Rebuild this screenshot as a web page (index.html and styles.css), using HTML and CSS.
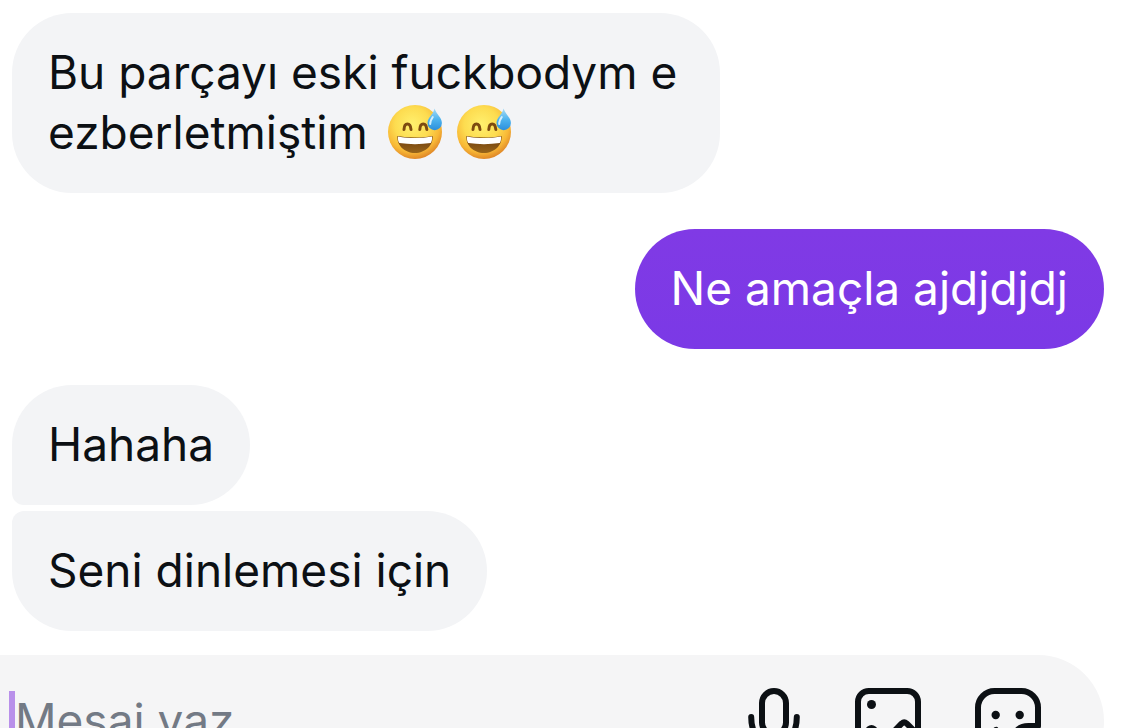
FILE: index.html
```html
<!doctype html>
<html lang="tr">
  <head>
    <meta charset="utf-8" />
    <meta name="viewport" content="width=device-width, initial-scale=1" />
    <title>Mesajlar</title>
    <link rel="stylesheet" href="styles.css">
  </head>
  <body>
    <!-- Shared drawings -->
    <svg class="defs" aria-hidden="true">
      <defs>
        <radialGradient id="face" cx="45%" cy="36%" r="64%">
          <stop offset="0" stop-color="#fff06e" />
          <stop offset="0.5" stop-color="#fddc50" />
          <stop offset="0.8" stop-color="#f8b836" />
          <stop offset="1" stop-color="#e08828" />
        </radialGradient>
        <linearGradient id="drop" x1="0" y1="0" x2="0" y2="1">
          <stop offset="0" stop-color="#a9dcf5" />
          <stop offset="0.5" stop-color="#4fb4ee" />
          <stop offset="1" stop-color="#2b8fdc" />
        </linearGradient>
        <linearGradient id="mouth" x1="0" y1="0" x2="0" y2="1">
          <stop offset="0" stop-color="#6b3a0c" />
          <stop offset="1" stop-color="#98651a" />
        </linearGradient>
        <symbol id="sweat-smile" viewBox="0 0 54 54">
          <circle cx="27" cy="27" r="27" fill="url(#face)" />
          <path d="M16 24.500c.3-7.500 6.500-7.500 7 0M31.800 24.500c.3-7.500 6.500-7.500 7 0" fill="none" stroke="#7d4a10" stroke-width="3" stroke-linecap="round" />
          <path d="M9.500 31c11.500 2 23.500 2 35 0c1 9-7 17-17.500 17S8.500 40 9.500 31z" fill="url(#mouth)" />
          <path d="M10 31.500c11.500 2 22.500 2 34 0c.3 3-.2 5-1.300 6.500c-10 1.500-21.400 1.500-31.400 0C10.200 36.500 9.700 34.500 10 31.500z" fill="#fff" />
          <path d="M46.500 3.500c-1 6-7 9-7 14.500a7.200 7.200 0 0 0 14.400 0c0-5.500-5.400-8.500-7.400-14.500z" fill="url(#drop)" />
          <path d="M44.800 12c-2 3-2.800 4.500-2.600 7" fill="none" stroke="#d4effc" stroke-width="2" stroke-linecap="round" />
        </symbol>
      </defs>
    </svg>

    <main class="thread">
      <div class="group">
        <p class="bubble">Bu parçayı eski fuckbodym e ezberletmiştim <svg class="emoji" role="img" aria-label="😅"><use href="#sweat-smile" /></svg><svg class="emoji" role="img" aria-label="😅"><use href="#sweat-smile" /></svg></p>
      </div>
      <div class="group sent">
        <p class="bubble">Ne amaçla ajdjdjdj</p>
      </div>
      <div class="group">
        <p class="bubble">Hahaha</p>
        <p class="bubble">Seni dinlemesi için</p>
      </div>
    </main>

    <form class="composer">
      <span class="caret"></span>
      <input class="message" type="text" placeholder="Mesaj yaz..." aria-label="Mesaj yaz" />
      <div class="actions">
        <button class="action" type="button" aria-label="Sesli mesaj">
          <svg class="icon" viewBox="0 0 24 24">
            <rect x="10" y="2" width="8" height="14.500" rx="4" />
            <path d="M6.400 10.700c0 5.500 2.800 8.800 7.600 8.800s7.600-3.300 7.600-8.800M14 19.500V23" />
          </svg>
        </button>
        <button class="action" type="button" aria-label="Fotoğraf">
          <svg class="icon" viewBox="0 0 24 24">
            <rect x="2" y="2" width="20" height="20" rx="3.600" />
            <circle class="dot" cx="6.500" cy="6.500" r="1.500" />
            <path d="M2 18.500l3.700-3.800q.8-.7 1.600 0l7 7M11.500 18l5.100-5.200q.8-.7 1.600 0L22 16.600" />
          </svg>
        </button>
        <button class="action" type="button" aria-label="Çıkartma">
          <svg class="icon" viewBox="0 0 24 24">
            <path d="M13.500 22H7.500A5.500 5.500 0 0 1 2 16.500v-9A5.500 5.500 0 0 1 7.500 2h9A5.500 5.500 0 0 1 22 7.500v6L13.500 22v-3c0-3.200 2.200-5.300 5.300-5.300H22" />
            <path d="M8 15c.8 1.500 2 2.300 3.700 2.300" />
            <circle class="dot" cx="7.900" cy="10" r="1.400" />
            <circle class="dot" cx="15.900" cy="10" r="1.400" />
          </svg>
        </button>
      </div>
    </form>
  </body>
</html>
```
FILE: styles.css
```css
* {
  box-sizing: border-box;
}

body {
  margin: 0;
  height: 100vh;
  overflow: hidden;
  background: #fff;
  color: #0c1014;
  font-family: Inter, "Liberation Sans", sans-serif;
  font-size: 46px;
  line-height: 60px;
}

.defs {
  position: absolute;
  width: 0;
  height: 0;
}

.thread {
  display: flex;
  flex-direction: column;
  gap: 36px;
  padding: 13px 24px 24px 12px;
}

.group {
  display: flex;
  flex-direction: column;
  align-items: flex-start;
  gap: 6px;
}

.bubble {
  margin: 0;
  max-width: 708px;
  padding: 29px 36px 31px;
  border-radius: 60px;
  background: #f3f4f6;
}

.group .bubble:not(:last-child) {
  border-bottom-left-radius: 12px;
}

.group .bubble:not(:first-child) {
  border-top-left-radius: 12px;
}

.sent {
  align-items: flex-end;
}

.sent .bubble {
  background: linear-gradient(#803ae5, #7b39e6);
  color: #fff;
}

.emoji {
  width: 54px;
  height: 54px;
  margin: 0 8px 0 7px;
  vertical-align: -10px;
}

/* composer */
.composer {
  display: flex;
  align-items: center;
  height: 132px;
  margin-right: 24px;
  padding: 0 60px 0 9px;
  border-radius: 0 66px 66px 0;
  background: #f5f5f6;
}

.caret {
  width: 6px;
  height: 60px;
  background: #b990ea;
}

.message {
  flex: 1;
  min-width: 0;
  height: 60px;
  padding: 0 0 2px;
  border: 0;
  outline: 0;
  background: none;
  color: inherit;
  font: inherit;
}

.message::placeholder {
  color: #737a85;
  opacity: 1;
}

.actions {
  display: flex;
  gap: 48px;
}

.action {
  width: 72px;
  height: 72px;
  padding: 0;
  border: 0;
  background: none;
  color: inherit;
}

.icon {
  display: block;
  width: 72px;
  height: 72px;
  fill: none;
  stroke: currentColor;
  stroke-width: 2;
  stroke-linecap: round;
  stroke-linejoin: round;
}

.dot {
  fill: currentColor;
  stroke: none;
}
```
